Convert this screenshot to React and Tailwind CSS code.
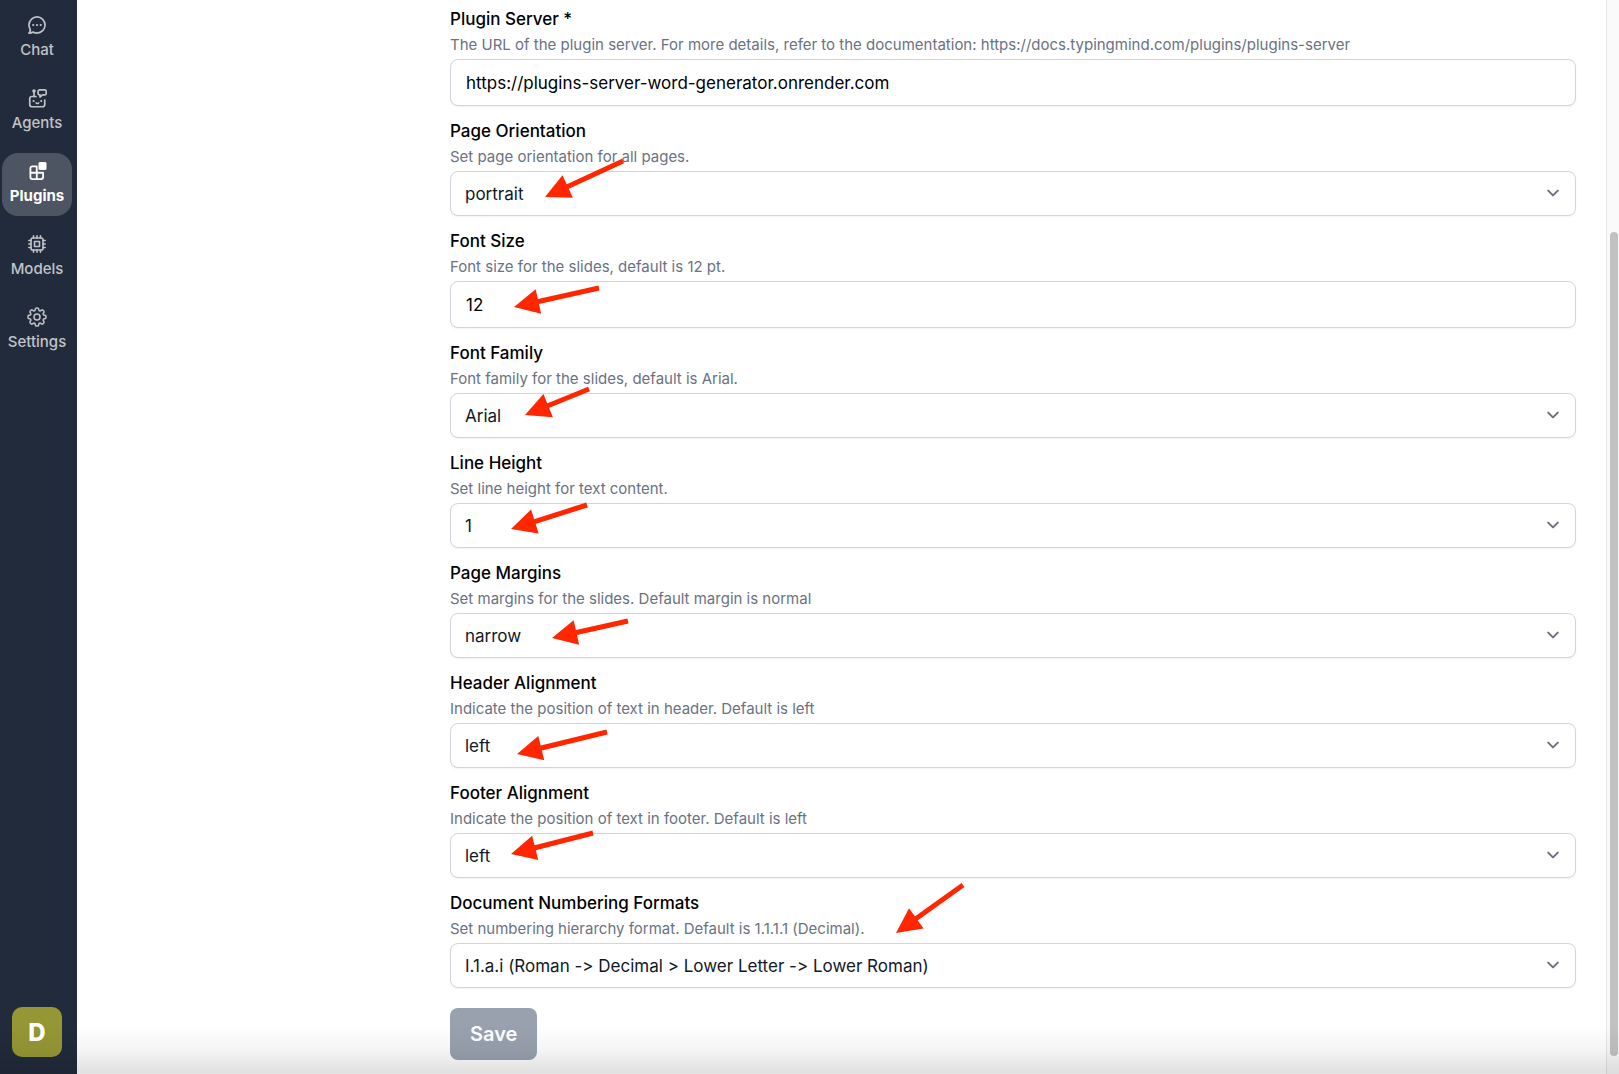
import { useState } from 'react';
import { HiOutlineCog8Tooth } from 'react-icons/hi2';
import clsx from 'clsx';

function ChatIcon({ className }) {
  return (
    <svg viewBox="0 0 18 18" className={className} fill="none" stroke="currentColor" strokeWidth="1.5" strokeLinejoin="round" aria-hidden="true">
      <path d="M9,1.75C4.996,1.75,1.75,4.996,1.75,9c0,1.319,.358,2.552,.973,3.617,.43,.806-.053,2.712-.973,3.633,1.25,.068,2.897-.497,3.633-.973,.489,.282,1.264,.656,2.279,.848,.433,.082,.881,.125,1.338,.125,4.004,0,7.25-3.246,7.25-7.25S13.004,1.75,9,1.75Z" />
      <g fill="currentColor" stroke="none">
        <circle cx="5.6" cy="9" r="1" />
        <circle cx="9" cy="9" r="1" />
        <circle cx="12.4" cy="9" r="1" />
      </g>
    </svg>
  );
}

function AgentsIcon({ className }) {
  return (
    <svg viewBox="0 0 20 20" className={className} fill="none" stroke="currentColor" strokeWidth="1.7" strokeLinecap="round" strokeLinejoin="round" aria-hidden="true">
      <path d="M9 8.5H4.75a2 2 0 0 0-2 2v6a2.25 2.25 0 0 0 2.25 2.25h10.5a2.25 2.25 0 0 0 2.25-2.25V12" />
      <path d="M7 8.5V3.5" />
      <path d="M12.5 1.9h5.3a1.4 1.4 0 0 1 1.4 1.4v2.2a1.4 1.4 0 0 1-1.4 1.4h-2.3l-2.5 2.1v-2.1h-.5a1.4 1.4 0 0 1-1.4-1.4v-2.2a1.4 1.4 0 0 1 1.4-1.4z" />
      <path d="M9.2 15c.6.7 1.8.7 2.4 0" />
      <g fill="currentColor" stroke="none">
        <circle cx="7" cy="3" r="1.8" />
        <circle cx="6.6" cy="13" r="1.1" />
        <circle cx="14.2" cy="13" r="1.1" />
      </g>
    </svg>
  );
}

function PluginsIcon({ className }) {
  return (
    <svg viewBox="0 0 20 20" className={className} fill="none" stroke="currentColor" strokeWidth="1.8" strokeLinejoin="round" aria-hidden="true">
      <path d="M9.75 5.4H5.4a2 2 0 0 0-2 2v8.7a2 2 0 0 0 2 2h8.7a2 2 0 0 0 2-2v-4.35H9.75zM9.75 11.75v6.35M3.4 11.75h6.35" />
      <rect x="11.5" y="1" width="8" height="8" rx="1.5" fill="currentColor" stroke="none" />
    </svg>
  );
}

function ModelsIcon({ className }) {
  return (
    <svg viewBox="0 0 20 20" className={className} fill="none" stroke="currentColor" strokeWidth="1.6" strokeLinecap="round" strokeLinejoin="round" aria-hidden="true">
      <rect x="4" y="4" width="12" height="12" rx="1.8" />
      <rect x="7.5" y="7.5" width="5" height="5" rx="0.3" />
      <path d="M6.5 4V1.8M10 4V1.8M13.5 4V1.8M6.5 18.2V16M10 18.2V16M13.5 18.2V16M4 6.5H1.8M4 10H1.8M4 13.5H1.8M18.2 6.5H16M18.2 10H16M18.2 13.5H16" />
    </svg>
  );
}

const NAV_ITEMS = [
  { label: 'Chat', icon: ChatIcon, size: 'size-5' },
  { label: 'Agents', icon: AgentsIcon, size: 'size-5' },
  { label: 'Plugins', icon: PluginsIcon, size: 'size-5', active: true },
  { label: 'Models', icon: ModelsIcon, size: 'size-5' },
  { label: 'Settings', icon: HiOutlineCog8Tooth, size: 'size-6' },
];

const FIELDS = [
  {
    id: 'pluginServer',
    label: 'Plugin Server *',
    hint: 'The URL of the plugin server. For more details, refer to the documentation: https://docs.typingmind.com/plugins/plugins-server',
    value: 'https://plugins-server-word-generator.onrender.com',
  },
  {
    id: 'pageOrientation',
    label: 'Page Orientation',
    hint: 'Set page orientation for all pages.',
    value: 'portrait',
    options: ['portrait', 'landscape'],
  },
  {
    id: 'fontSize',
    label: 'Font Size',
    hint: 'Font size for the slides, default is 12 pt.',
    value: '12',
  },
  {
    id: 'fontFamily',
    label: 'Font Family',
    hint: 'Font family for the slides, default is Arial.',
    value: 'Arial',
    options: ['Arial', 'Calibri', 'Times New Roman'],
  },
  {
    id: 'lineHeight',
    label: 'Line Height',
    hint: 'Set line height for text content.',
    value: '1',
    options: ['1', '1.15', '1.5', '2'],
  },
  {
    id: 'pageMargins',
    label: 'Page Margins',
    hint: 'Set margins for the slides. Default margin is normal',
    value: 'narrow',
    options: ['normal', 'narrow', 'moderate', 'wide'],
  },
  {
    id: 'headerAlignment',
    label: 'Header Alignment',
    hint: 'Indicate the position of text in header. Default is left',
    value: 'left',
    options: ['left', 'center', 'right'],
  },
  {
    id: 'footerAlignment',
    label: 'Footer Alignment',
    hint: 'Indicate the position of text in footer. Default is left',
    value: 'left',
    options: ['left', 'center', 'right'],
  },
  {
    id: 'numberingFormat',
    label: 'Document Numbering Formats',
    hint: 'Set numbering hierarchy format. Default is 1.1.1.1 (Decimal).',
    value: 'I.1.a.i (Roman -> Decimal > Lower Letter -> Lower Roman)',
    options: ['1.1.1.1 (Decimal)', 'I.1.a.i (Roman -> Decimal > Lower Letter -> Lower Roman)'],
  },
];

// [tail x, tail y, tip x, tip y] from the form's top left corner
const ARROWS = [
  [173, 161, 95, 197],
  [149, 288, 64, 307],
  [139, 389, 75, 415],
  [137, 505, 61, 529],
  [178, 621, 102, 638],
  [157, 732, 67, 754],
  [143, 833, 61, 854],
  [513, 885, 446, 933],
];

function Arrow({ points: [x1, y1, x2, y2] }) {
  const length = Math.hypot(x2 - x1, y2 - y1);
  const angle = (Math.atan2(y2 - y1, x2 - x1) * 180) / Math.PI;

  return (
    <g transform={`translate(${x1} ${y1}) rotate(${angle})`}>
      <rect x="0" y="-2.5" width={length - 24} height="5" />
      <path d={`M${length} 0l-25 -12.5v25z`} />
    </g>
  );
}

function Sidebar() {
  return (
    <aside className="flex w-[77px] shrink-0 flex-col justify-between bg-[#222b3b] pt-[7px] pb-[17px]">
      <nav className="flex flex-col gap-2.5 pr-[5px] pl-0.5">
        {NAV_ITEMS.map(({ label, icon: Icon, size, active }) => (
          <a
            key={label}
            href="#"
            aria-current={active ? 'page' : undefined}
            className={clsx(
              'flex h-[63px] flex-col items-center gap-[3px] rounded-2xl pt-1.5 text-[15px] leading-5',
              active ? 'bg-[#4e5562] font-bold text-white' : 'font-medium text-[#c0c3c8]',
            )}
          >
            <span className="flex size-6 items-center justify-center">
              <Icon className={size} />
            </span>
            {label}
          </a>
        ))}
      </nav>
      <button
        type="button"
        aria-label="Account"
        className="ml-3 size-[50px] rounded-[10px] bg-[#959735] pt-0.5 text-2xl font-extrabold text-white"
      >
        D
      </button>
    </aside>
  );
}

function Field({ id, label, hint, options, value, onChange }) {
  const shared = 'block w-full rounded-lg border border-[#d1d5db] bg-white text-[17px] leading-6 shadow-xs';

  return (
    <div className="flex flex-col">
      <label htmlFor={id} className="text-[17px] leading-6 font-medium text-black">
        {label}
      </label>
      <p id={`${id}-hint`} className="my-0.5 text-[15px] leading-6 text-gray-500">
        {hint}
      </p>
      {options ? (
        <div className="relative">
          <select
            id={id}
            value={value}
            onChange={onChange}
            aria-describedby={`${id}-hint`}
            className={clsx(shared, 'h-[45px] appearance-none pr-12 pl-3.5 text-gray-900')}
          >
            {options.map((option) => (
              <option key={option}>{option}</option>
            ))}
          </select>
          <svg
            viewBox="0 0 20 20"
            className="pointer-events-none absolute top-2.5 right-[11px] size-6 text-gray-500"
            fill="none"
            stroke="currentColor"
            strokeWidth="1.7"
            strokeLinecap="round"
            strokeLinejoin="round"
            aria-hidden="true"
          >
            <path d="M6 8l4 4 4-4" />
          </svg>
        </div>
      ) : (
        <input
          id={id}
          type="text"
          value={value}
          onChange={onChange}
          aria-describedby={`${id}-hint`}
          className={clsx(shared, 'h-[47px] px-[15px] text-black')}
        />
      )}
    </div>
  );
}

export default function App() {
  const [values, setValues] = useState(() => Object.fromEntries(FIELDS.map((f) => [f.id, f.value])));

  return (
    // calt is off so that "->" is not drawn as an arrow ligature
    <div className="relative flex min-h-screen bg-white font-['Inter',sans-serif] [font-feature-settings:'calt'_0]">
      <Sidebar />

      <main className="flex min-w-0 flex-1 pr-[30px] pl-[373px]">
        <form className="relative flex min-w-0 flex-1 flex-col gap-[13px] pt-[7px] pb-3.5" onSubmit={(e) => e.preventDefault()}>
          {FIELDS.map((field) => (
            <Field
              key={field.id}
              {...field}
              value={values[field.id]}
              onChange={(e) => setValues((v) => ({ ...v, [field.id]: e.target.value }))}
            />
          ))}
          <button
            type="submit"
            className="mt-[7px] h-[52px] w-fit rounded-lg bg-gray-400 px-5 text-xl font-semibold text-white"
          >
            Save
          </button>
          <svg className="pointer-events-none absolute top-0 left-0 size-full overflow-visible fill-[#ff2600]" aria-hidden="true">
            {ARROWS.map((points) => (
              <Arrow key={points.join()} points={points} />
            ))}
          </svg>
        </form>
      </main>

      {/* scroll track */}
      <div className="w-[13px] shrink-0 border-l border-[#e6e6e6] bg-[#fafafa] pt-[232px] pr-px pb-[18px] pl-[3px]">
        <div className="h-full rounded-full bg-[#c1c1c1]" />
      </div>

      <div className="pointer-events-none absolute inset-x-0 bottom-0 h-12 border-b border-black/10 bg-linear-to-t from-black/12 via-black/4 to-transparent" />
    </div>
  );
}
